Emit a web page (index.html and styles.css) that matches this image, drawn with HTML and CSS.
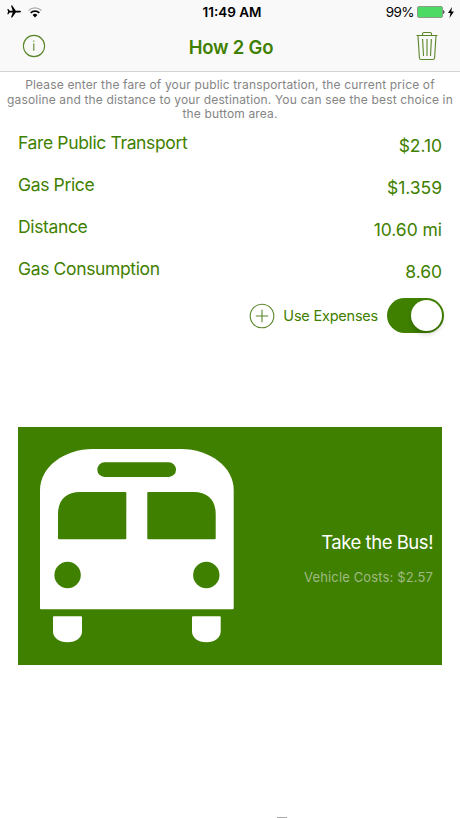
FILE: index.html
```html
<!DOCTYPE html>
<html>
<head>
  <meta charset="utf-8">
  <meta name="viewport" content="width=device-width">
  <title>How 2 Go</title>
  <link rel="stylesheet" href="styles.css">
</head>
<body>
<header class="header">
  <div class="status">
    <div class="status-side">
      <svg width="14" height="14" viewBox="0 0 14 14"><path d="M14 6.600c0-.6-.6-.9-1.600-.9H8.800L5.200 .6H4l1.700 5.100H2.700L1.300 4H.3l.8 2.600-.8 2.600h1l1.400-1.700h3L4 12.600h1.200l3.600-5.100h3.600c1 0 1.600-.3 1.600-.9z"/></svg>
      <svg width="14" height="11" viewBox="0 0 14 11"><path d="M.6 3.500a9.200 9.200 0 0 1 12.800 0" fill="none" stroke="#aaa" stroke-width="1.300"/><path d="M2.700 5.900a6.200 6.200 0 0 1 8.600 0" fill="none" stroke="#000" stroke-width="1.700"/><path d="M4.600 8a3.500 3.500 0 0 1 4.800 0L7 10.400z"/></svg>
    </div>
    <div class="time">11:49 AM</div>
    <div class="status-side right">
      <span class="percent">99%</span>
      <svg width="28" height="12" viewBox="0 0 28 12"><rect x=".5" y=".5" width="25" height="11" rx="1.500" fill="#4cd964" stroke="#8c9c8e"/><path d="M26.400 4v4c1.300-.3 1.300-3.700 0-4z"/></svg>
      <svg width="6" height="11" viewBox="0 0 6 11"><path d="M4 0L0 6h2.500L1.500 11 6 4.600H3.300z"/></svg>
    </div>
  </div>
  <div class="nav">
    <svg width="24" height="24" viewBox="0 0 24 24" class="icon"><circle cx="12" cy="12" r="10.600"/><path d="M11.800 9.500v7.300M11.800 6.400v1.400"/></svg>
    <h1 class="title">How 2 Go</h1>
    <svg width="22" height="30" viewBox="0 0 22 30" class="icon"><path d="M.5 4.500h21M6.500 4.300V3q0-1.500 1.500-1.500h6q1.500 0 1.500 1.500v1.300M2 4.800l1.400 22q.1 1.700 1.700 1.700h11.800q1.600 0 1.700-1.700l1.400-22M6.600 8l.9 17M11 8v17M15.400 8l-.9 17"/></svg>
  </div>
</header>

<p class="intro">Please enter the fare of your public transportation, the current price of<br>gasoline and the distance to your destination. You can see the best choice in<br>the buttom area.</p>

<div class="rows">
  <div class="row"><span class="label">Fare Public Transport</span><span class="value">$2.10</span></div>
  <div class="row"><span class="label">Gas Price</span><span class="value">$1.359</span></div>
  <div class="row"><span class="label">Distance</span><span class="value">10.60 mi</span></div>
  <div class="row"><span class="label">Gas Consumption</span><span class="value">8.60</span></div>
</div>

<div class="expenses">
  <svg width="26" height="26" viewBox="0 0 26 26" class="icon"><circle cx="13" cy="13" r="11.800"/><path d="M13 6.800v12.400M6.800 13h12.400"/></svg>
  <span class="expenses-label">Use Expenses</span>
  <div class="switch"><div class="knob"></div></div>
</div>

<div class="result">
  <svg class="bus" width="216" height="238" viewBox="0 0 216 238">
    <path fill="#fff" d="M22 63C22 40 46 22 75 22h88c29 0 52.700 18 52.700 41v118.300q0 1-1 1H23q-1 0-1-1z"/>
    <rect x="79.300" y="35.300" width="78.700" height="14.700" rx="7.300"/>
    <path d="M40 87c0-14 8-22 22-22h45.300q1 0 1 1v45.300q0 1-1 1H41q-1 0-1-1z"/>
    <path d="M197.700 87c0-14-8-22-22-22h-45.400q-1 0-1 1v45.300q0 1 1 1h66.400q1 0 1-1z"/>
    <circle cx="49.600" cy="148" r="13.200"/>
    <circle cx="188.300" cy="148" r="13.200"/>
    <path fill="#fff" d="M35 190.300q0-1 1-1h27q1 0 1 1v14.200c0 6-6 10.800-14.500 10.800S35 210.500 35 204.500z"/>
    <path fill="#fff" d="M174 190.300q0-1 1-1h26.700q1 0 1 1v14.200c0 6-6 10.800-14.400 10.800S174 210.500 174 204.500z"/>
  </svg>
  <div class="advice">
    <div class="choice">Take the Bus!</div>
    <div class="costs">Vehicle Costs: $2.57</div>
  </div>
</div>
<div class="handle"></div>
</body>
</html>
```

FILE: styles.css
```css
* {
  box-sizing: border-box;
}
body {
  margin: 0;
  height: 818px;
  overflow: hidden;
  display: flex;
  flex-direction: column;
  background: #fff;
  color: #3f8000;
  font-family: Inter, "Liberation Sans", sans-serif;
}
svg {
  display: block;
  flex: none;
}
.header {
  height: 72px;
  background: #f9f9f9;
  border-bottom: 1px solid #d4d4d4;
}
.status {
  height: 24px;
  padding: 0 6px 0 7px;
  display: grid;
  grid-template-columns: 1fr auto 1fr;
  align-items: center;
  color: #000;
}
.status-side {
  display: flex;
  align-items: center;
  gap: 7px;
}
.right {
  justify-content: flex-end;
  gap: 3px;
}
.time {
  padding-left: 3px;
  font-size: 13.5px;
  font-weight: 600;
}
.percent {
  font-size: 13.5px;
  letter-spacing: -.6px;
}
.nav {
  height: 46px;
  padding: 0 22px 3px;
  display: flex;
  align-items: center;
  justify-content: space-between;
}
.icon {
  fill: none;
  stroke: #5a8629;
  stroke-width: 1.1;
}
.title {
  margin: 3px 0 0;
  font-size: 18.5px;
  font-weight: 600;
  letter-spacing: -.2px;
}
.intro {
  margin: 6px 0 0;
  height: 43px;
  font-size: 12px;
  line-height: 14.5px;
  letter-spacing: .15px;
  text-align: center;
  white-space: nowrap;
  color: #858585;
}
.rows {
  padding: 0 18px;
}
.row {
  height: 42.1px;
  padding-top: 11px;
  display: flex;
  justify-content: space-between;
  font-size: 17.5px;
  line-height: 22px;
}
.label {
  letter-spacing: -.36px;
}
.value {
  margin-top: 3px;
  letter-spacing: -.05px;
}
.expenses {
  height: 36px;
  margin-top: 8.6px;
  padding-right: 16px;
  display: flex;
  align-items: center;
  justify-content: flex-end;
}
.expenses-label {
  margin: 0 9px 0 8px;
  font-size: 14.5px;
  letter-spacing: -.22px;
}
.switch {
  width: 57px;
  height: 35px;
  padding: 2px;
  border-radius: 18px;
  background: #3f8000;
  display: flex;
  justify-content: flex-end;
}
.knob {
  width: 31px;
  height: 31px;
  border-radius: 50%;
  background: #fff;
  box-shadow: 0 3px 5px rgba(0,0,0,.2);
}
.result {
  width: 424px;
  height: 238.5px;
  margin: 93px 18px 0;
  padding-right: 9px;
  display: flex;
  justify-content: space-between;
  background: #3f8000;
}
.bus {
  fill: #3f8000;
}
.advice {
  padding-top: 103px;
  text-align: right;
  white-space: nowrap;
}
.choice {
  font-size: 18.5px;
  line-height: 24px;
  letter-spacing: -.46px;
  color: #fff;
}
.costs {
  margin-top: 14px;
  font-size: 13px;
  line-height: 18px;
  letter-spacing: .14px;
  color: #9fba82;
}
.handle {
  width: 10px;
  height: 1px;
  margin: auto 0 0 277px;
  background: #aaa;
}
```
